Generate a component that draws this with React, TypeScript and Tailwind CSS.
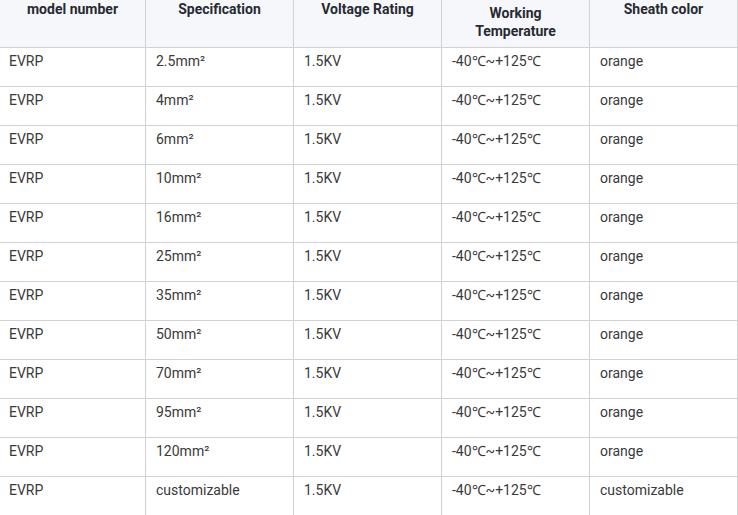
const headers = [
  { label: "model number", two: false },
  { label: "Specification", two: false },
  { label: "Voltage Rating", two: false },
  { label: "Working Temperature", two: true },
  { label: "Sheath color", two: false },
];

const specs = ["2.5mm²", "4mm²", "6mm²", "10mm²", "16mm²", "25mm²", "35mm²", "50mm²", "70mm²", "95mm²", "120mm²", "customizable"];

const rows = specs.map((spec) => [
  "EVRP",
  spec,
  "1.5KV",
  "-40℃~+125℃",
  spec === "customizable" ? "customizable" : "orange",
]);

const widths = ["w-[146px]", "w-[148px]", "w-[148px]", "w-[148px]", "w-[148px]"];

export default function App() {
  return (
    <div className="w-[738px] bg-white font-[Roboto,Arial,sans-serif] text-[14px]">
      <div className="flex h-[48px] border-b border-[#d2d2d2] bg-[#f5f7fa]">
        {headers.map((h, i) => (
          <div
            key={h.label}
            className={`${widths[i]} shrink-0 border-r border-[#d2d2d2] px-[10px] text-center font-bold leading-[18px] text-[#262b33] ${h.two ? "pt-[4px]" : "pt-0"}`}
          >
            {h.two ? (
              <>
                Working
                <br />
                Temperature
              </>
            ) : (
              h.label
            )}
          </div>
        ))}
      </div>
      {rows.map((row, r) => (
        <div
          key={r}
          className={`flex ${r === rows.length - 1 ? "h-[38px]" : "h-[39px] border-b border-[#d2d2d2]"}`}
        >
          {row.map((cell, i) => (
            <div
              key={i}
              className={`${widths[i]} shrink-0 border-r border-[#d2d2d2] px-[10px] pt-[3px] leading-[20px] text-[#3a3a3a] ${i === 0 ? "pl-[9px]" : ""}`}
            >
              {cell}
            </div>
          ))}
        </div>
      ))}
    </div>
  );
}
